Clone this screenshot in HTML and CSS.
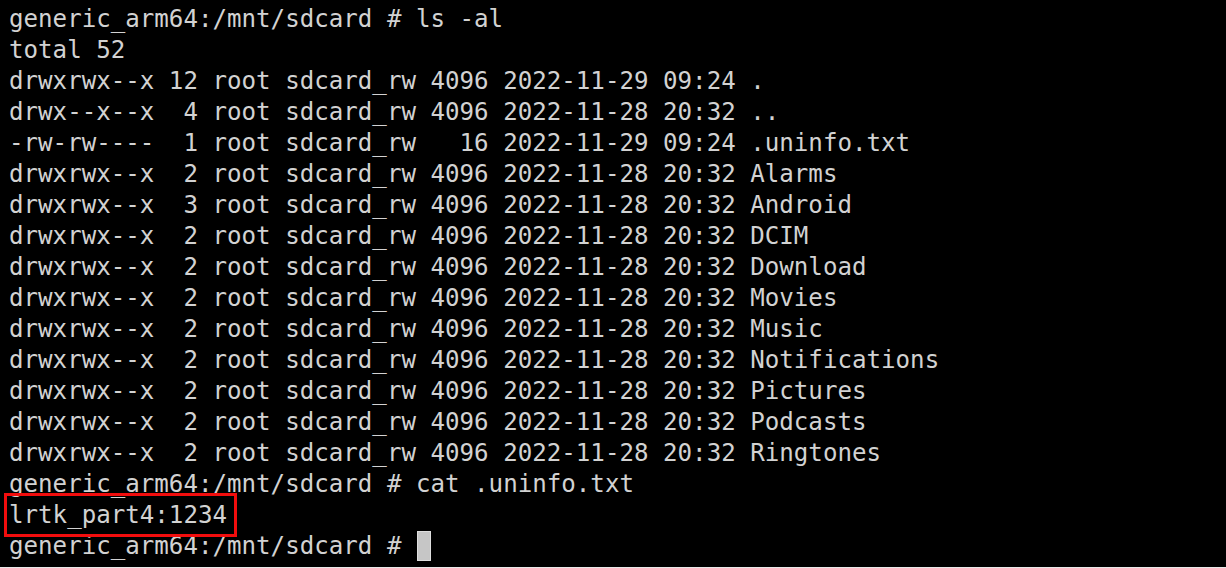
FILE: index.html
```html
<!DOCTYPE html>
<html lang="en">
<head>
    <meta charset="UTF-8">
    <title>adb shell</title>
    <link rel="stylesheet" href="styles.css">
</head>
<body>

    <!-- Terminal -->
    <div class="terminal">
<pre class="output">generic_arm64:/mnt/sdcard # ls -al
total 52
drwxrwx--x 12 root sdcard_rw 4096 2022-11-29 09:24 .
drwx--x--x  4 root sdcard_rw 4096 2022-11-28 20:32 ..
-rw-rw----  1 root sdcard_rw   16 2022-11-29 09:24 .uninfo.txt
drwxrwx--x  2 root sdcard_rw 4096 2022-11-28 20:32 Alarms
drwxrwx--x  3 root sdcard_rw 4096 2022-11-28 20:32 Android
drwxrwx--x  2 root sdcard_rw 4096 2022-11-28 20:32 DCIM
drwxrwx--x  2 root sdcard_rw 4096 2022-11-28 20:32 Download
drwxrwx--x  2 root sdcard_rw 4096 2022-11-28 20:32 Movies
drwxrwx--x  2 root sdcard_rw 4096 2022-11-28 20:32 Music
drwxrwx--x  2 root sdcard_rw 4096 2022-11-28 20:32 Notifications
drwxrwx--x  2 root sdcard_rw 4096 2022-11-28 20:32 Pictures
drwxrwx--x  2 root sdcard_rw 4096 2022-11-28 20:32 Podcasts
drwxrwx--x  2 root sdcard_rw 4096 2022-11-28 20:32 Ringtones
generic_arm64:/mnt/sdcard # cat .uninfo.txt
lrtk_part4:1234
generic_arm64:/mnt/sdcard # <span class="cursor"> </span></pre>

        <!-- Markierung -->
        <div class="highlight"></div>
    </div>

</body>
</html>
```

FILE: styles.css
```css
* {
    margin: 0;
    padding: 0;
    box-sizing: border-box;
}

html, body {
    height: 100%;
    background-color: #000;
}

.terminal {
    position: relative;
    height: 100%;
    background-color: #000;
    border-bottom: 1px solid #e8e8e8;
    overflow: hidden;
}

.output {
    font-family: "DejaVu Sans Mono", monospace;
    font-size: 24.15px;
    line-height: 31px;
    color: #d2d2d2;
    padding: 4px 0 0 9px;
}

.cursor {
    display: inline-block;
    width: 14px;
    height: 30px;
    vertical-align: top;
    margin-left: 1px;
    background-color: #c6c6c6;
    border: 1px solid #dedede;
}

/* roter Rahmen um die Ausgabe */
.highlight {
    position: absolute;
    left: 4px;
    top: 493px;
    width: 233px;
    height: 44px;
    border: 3px solid #f20d0d;
}
```
